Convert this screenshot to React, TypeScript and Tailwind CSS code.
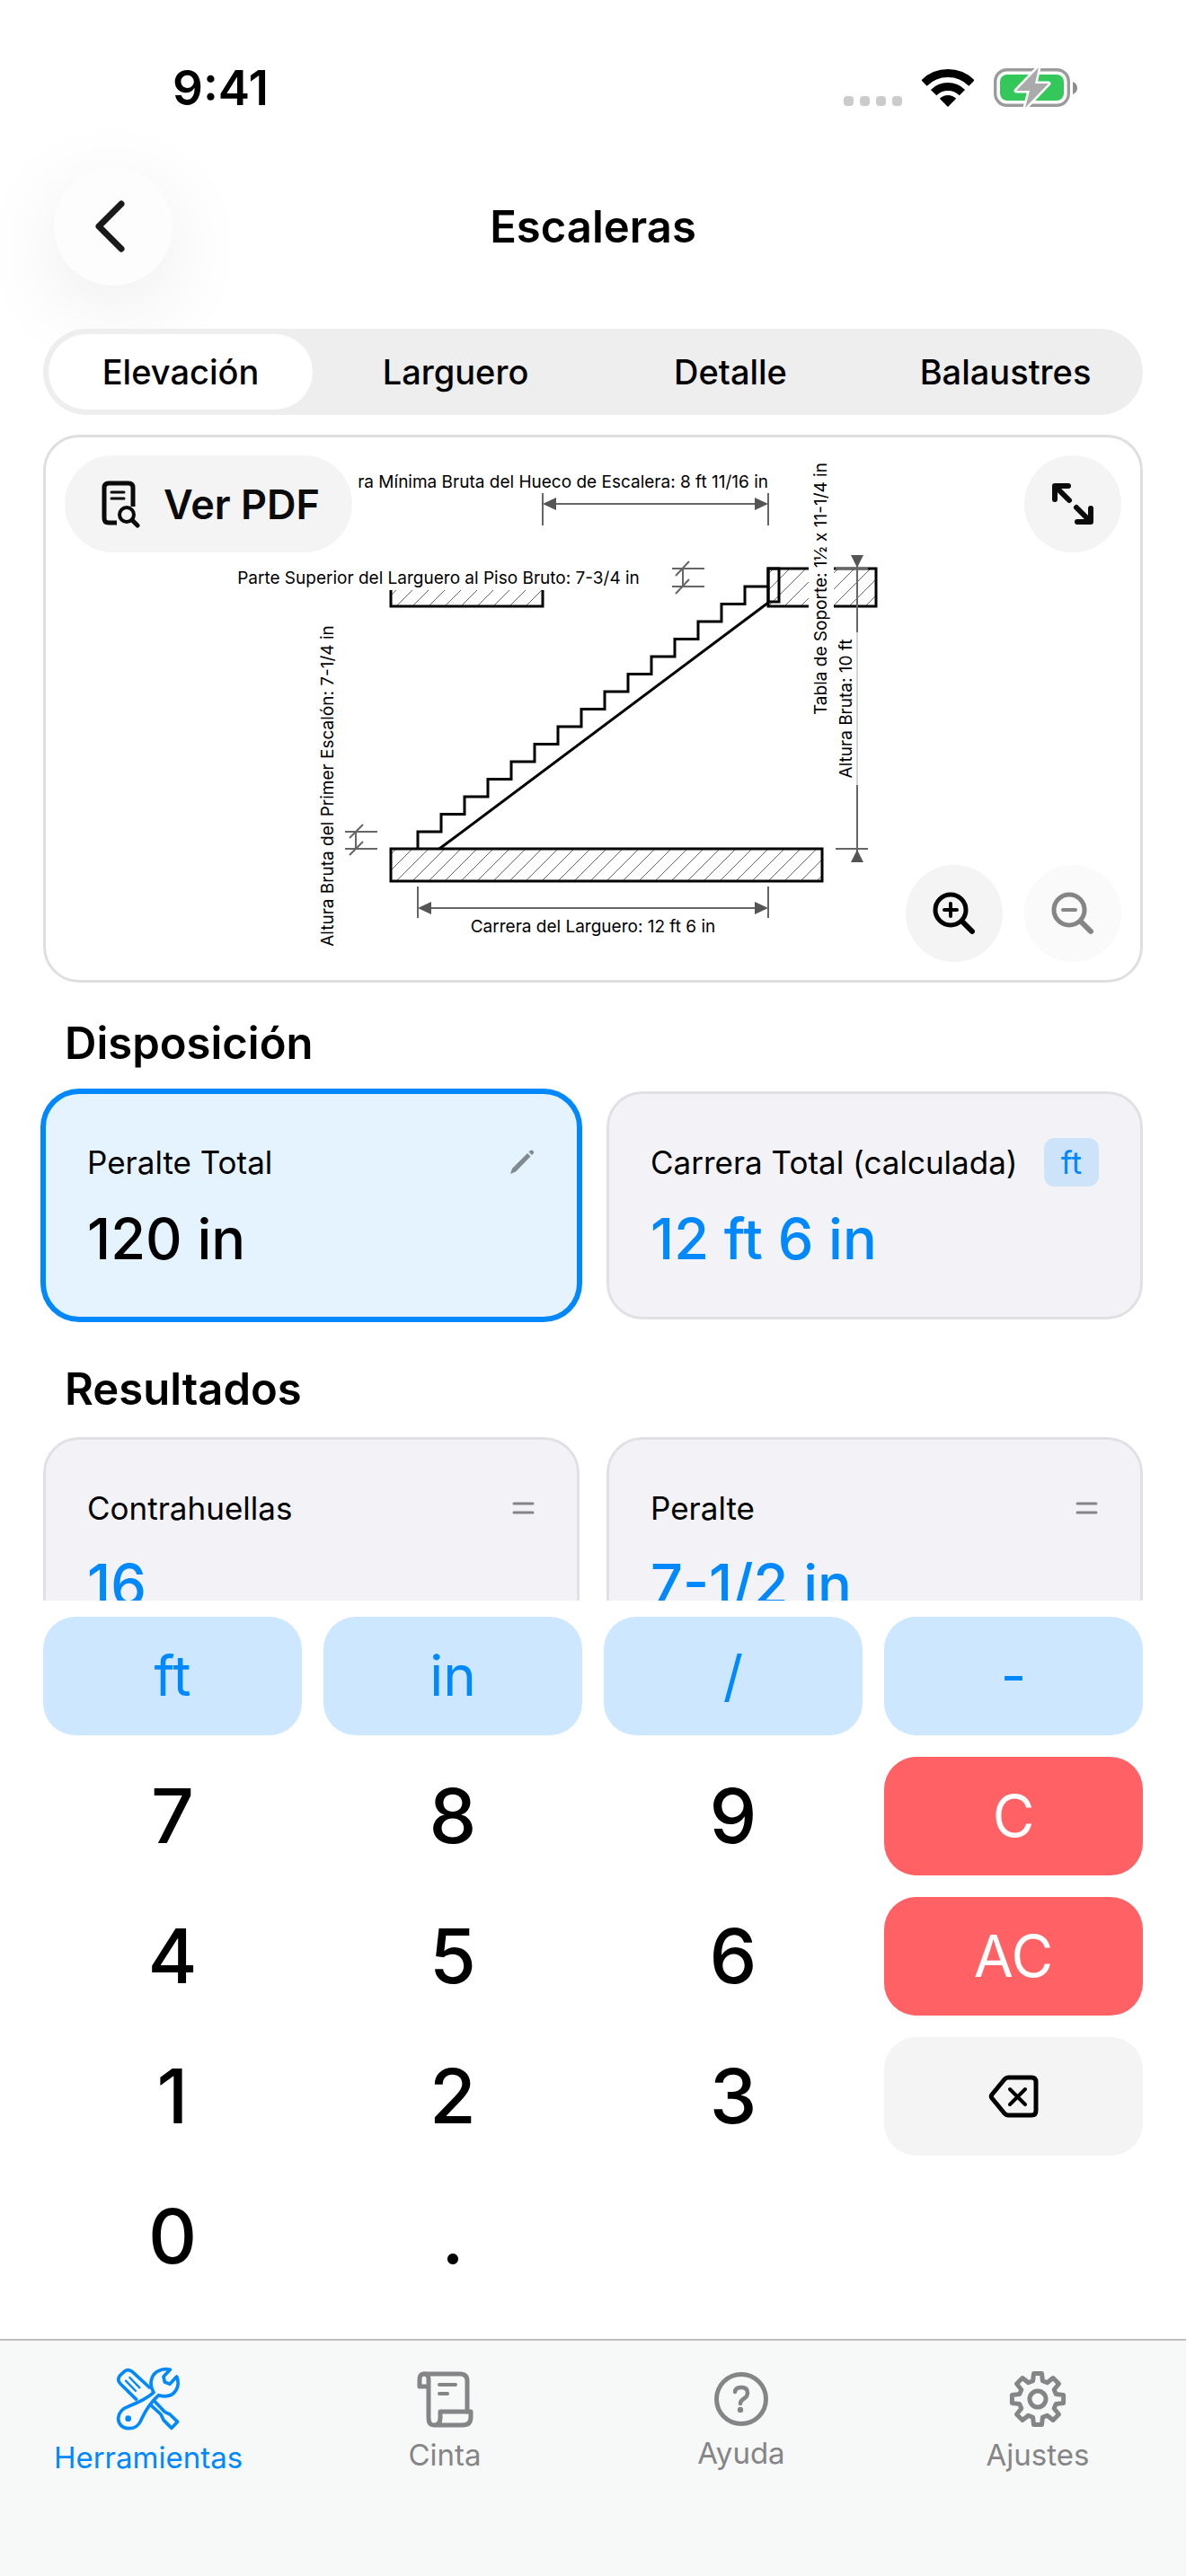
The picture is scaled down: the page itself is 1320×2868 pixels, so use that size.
import React, { useState } from 'react';

const tabs = ['Elevación', 'Larguero', 'Detalle', 'Balaustres'];

const STEP_RUN = 26;
const STEP_RISE = 19.5;

// Stair outline, from the lower floor up to the header board
const stairPath = (() => {
  let d = 'M465 945 V926';
  for (let i = 1; i <= 14; i++) {
    d += ` H${465 + i * STEP_RUN} V${926 - i * STEP_RISE}`;
  }
  return d + ' H855';
})();

const gearPath = (() => {
  const pts: string[] = [];
  for (let i = 0; i < 8; i++) {
    const corners = [[21, -15], [29, -9], [29, 9], [21, 15]];
    corners.forEach(([r, off]) => {
      const a = ((i * 45 + off) * Math.PI) / 180;
      pts.push(`${(32 + r * Math.sin(a)).toFixed(1)} ${(32 - r * Math.cos(a)).toFixed(1)}`);
    });
  }
  return `M${pts.join(' L')} Z`;
})();

function StatusBar() {
  return (
    <div className="h-[186px] shrink-0 pt-[10px] pl-48 pr-30 flex items-center justify-between">
      <span className="text-[53px] leading-none font-semibold">9:41</span>
      <div className="flex items-center gap-[22px]">
        <div className="flex gap-[7px] pt-7">
          {[0, 1, 2, 3].map((dot) => (
            <span key={dot} className="size-[11px] rounded-sm bg-[#cbcbcb]"></span>
          ))}
        </div>
        <svg width="58" height="42" viewBox="0 0 58 42" fill="none" stroke="black" strokeWidth="9">
          <path d="M2.5 15.5 A37.5 37.5 0 0 1 55.5 15.5" />
          <path d="M13.1 26.1 A22.5 22.5 0 0 1 44.9 26.1" />
          <path d="M29 42 L19.8 32.8 A13 13 0 0 1 38.2 32.8 Z" fill="black" stroke="none" />
        </svg>
        <svg width="94" height="46" viewBox="0 0 94 46" fill="none">
          <rect x="1.7" y="2.7" width="81.6" height="39.6" rx="13" stroke="#9b9b9b" strokeWidth="3.4" />
          <rect x="7" y="8" width="71" height="29" rx="8" fill="#34c759" />
          <path d="M88 16 Q93 18 93 23 Q93 28 88 30 Z" fill="#8e8e8e" />
          <path d="M50 0 L25 26 H40 L35 45 L61 18 H46 Z" fill="#aaaaaa" stroke="white" strokeWidth="5" strokeLinejoin="round" paintOrder="stroke" />
        </svg>
      </div>
    </div>
  );
}

function Diagram() {
  return (
    <svg className="block w-full h-auto" viewBox="51 487 1218 604" fill="none" fontFamily="Inter, sans-serif" fontSize="19">
      <defs>
        <pattern id="hatch" width="18" height="18" patternUnits="userSpaceOnUse">
          <path d="M-1 19 L19 -1 M-10 10 L10 -10 M8 28 L28 8" stroke="#666" strokeWidth="1" />
        </pattern>
      </defs>

      {/* Floors */}
      <g fill="url(#hatch)" stroke="black" strokeWidth="3">
        <rect x="435" y="633" width="169" height="42" />
        <rect x="855" y="633" width="120" height="42" />
        <rect x="435" y="945" width="480" height="36" />
      </g>

      {/* Stringer and header board */}
      <g stroke="black" strokeWidth="3">
        <path d={stairPath} />
        <path d="M489 945 L855 671" />
        <path d="M855 633 H867 V670 H855 Z" />
      </g>

      {/* Label backgrounds */}
      <g fill="white">
        <rect x="250" y="624" width="475" height="33" />
        <rect x="900" y="505" width="28" height="300" />
      </g>

      {/* Dimension lines */}
      <g stroke="#666" strokeWidth="2">
        <path d="M604 549 V585 M855 549 V585 M612 561 H846" />
        <path d="M465 987 V1022 M855 987 V1022 M473 1011 H846" />
        <path d="M748 633 H784 M748 653 H784 M760 633 V653" />
        <path d="M752 641 L767 625 M752 661 L767 645" />
        <path d="M384 926 H420 M384 945 H420 M396 926 V945" />
        <path d="M389 933 L404 918 M389 952 L404 937" />
        <path d="M954 625 V704 M954 874 V950 M930 945 H966 M930 633 H966" />
        <path d="M954 704 V874" stroke="#aaa" strokeWidth="1" />
      </g>
      <g fill="#555">
        <path d="M604 561 L619 554 V568 Z" />
        <path d="M855 561 L840 554 V568 Z" />
        <path d="M465 1011 L480 1004 V1018 Z" />
        <path d="M855 1011 L840 1004 V1018 Z" />
        <path d="M954 632 L947 618 H961 Z" />
        <path d="M954 946 L947 960 H961 Z" />
      </g>

      <g fill="black">
        <text x="855" y="543" textAnchor="end">ra Mínima Bruta del Hueco de Escalera: 8 ft 11/16 in</text>
        <text x="488" y="650" textAnchor="middle">Parte Superior del Larguero al Piso Bruto: 7-3/4 in</text>
        <text x="660" y="1038" textAnchor="middle">Carrera del Larguero: 12 ft 6 in</text>
        <text transform="translate(371 875) rotate(-90)" textAnchor="middle">Altura Bruta del Primer Escalón: 7-1/4 in</text>
        <text transform="translate(920 796) rotate(-90)">Tabla de Soporte: 1½ x 11-1/4 in</text>
        <text transform="translate(948 789) rotate(-90)" textAnchor="middle">Altura Bruta: 10 ft</text>
      </g>
    </svg>
  );
}

function ZoomIcon({ plus = false }: { plus?: boolean }) {
  return (
    <svg width="48" height="48" viewBox="0 0 48 48" fill="none" stroke="currentColor" strokeWidth="5" strokeLinecap="round">
      <circle cx="20" cy="20" r="17" />
      <path d="M33 33 L44 44" strokeWidth="6" />
      <path d={plus ? 'M13 20 H27 M20 13 V27' : 'M13 20 H27'} strokeWidth="4" />
    </svg>
  );
}

interface CardProps {
  label: string;
  value: string;
  icon: React.ReactNode;
  selected?: boolean;
}

function ValueCard({ label, value, icon, selected }: CardProps) {
  return (
    <button
      className={
        selected
          ? 'text-left rounded-[40px] border-[3px] border-[#0088ff] ring-3 ring-[#0088ff] bg-[#e5f3ff] px-[46px] pt-[49px] pb-[55px]'
          : 'text-left rounded-[40px] border-[3px] border-[#e1e1e5] bg-[#f2f2f7] px-[46px] pt-[49px] pb-[55px]'
      }
    >
      <span className="flex items-center justify-between h-[54px] text-[35px] whitespace-nowrap">
        {label}
        {icon}
      </span>
      <span className={selected ? 'block mt-[26px] text-[63px] leading-[64px] font-medium' : 'block mt-[26px] text-[63px] leading-[64px] font-medium text-[#0088ff]'}>
        {value}
      </span>
    </button>
  );
}

const PencilIcon = (
  <svg width="30" height="30" viewBox="0 0 30 30" fill="#808890">
    <path d="M2 28 L4 22 L21 5 L24.500 8.500 L8 25.500 Z" />
    <path d="M22.500 3.500 L24 2 Q25.500 .8 27 2 L27.500 2.500 Q29 4 27.500 5.500 L26 7 Z" />
  </svg>
);

const EqualIcon = (
  <svg width="26" height="16" viewBox="0 0 26 16" stroke="#858589" strokeWidth="3" strokeLinecap="round">
    <path d="M2 3 H23 M2 13 H23" />
  </svg>
);

const UnitChip = <span className="rounded-xl bg-[#cce3fa] px-[19px] leading-[54px] text-[#0088ff]">ft</span>;

const blueKey = 'h-[132px] rounded-[36px] bg-[#cce7ff] text-[#0088ff] text-[62px] leading-none';
const redKey = 'h-[132px] rounded-[36px] bg-[#ff6165] text-white text-[64px] leading-none';
const digitKey = 'h-[132px] rounded-[36px] text-[84px] leading-none font-medium';

function Keypad() {
  return (
    <div className="shrink-0 grid grid-cols-4 gap-6 px-12 pt-[18px] pb-12">
      {['ft', 'in', '/', '-'].map((key) => (
        <button key={key} className={blueKey}>{key}</button>
      ))}
      {['7', '8', '9'].map((key) => (
        <button key={key} className={digitKey}>{key}</button>
      ))}
      <button className={redKey}>C</button>
      {['4', '5', '6'].map((key) => (
        <button key={key} className={digitKey}>{key}</button>
      ))}
      <button className={redKey}>AC</button>
      {['1', '2', '3'].map((key) => (
        <button key={key} className={digitKey}>{key}</button>
      ))}
      <button className="h-[132px] rounded-[36px] bg-[#f4f4f4] flex items-center justify-center" aria-label="Borrar">
        <svg width="56" height="48" viewBox="0 0 56 48" fill="none" stroke="black" strokeWidth="5" strokeLinecap="round" strokeLinejoin="round">
          <path d="M22 3 H48 Q53 3 53 8 V40 Q53 45 48 45 H22 Q20 45 18 43 L4 26 Q2.500 24 4 22 L18 5 Q20 3 22 3 Z" />
          <path d="M24 16 L41 33 M41 16 L24 33" strokeWidth="4" />
        </svg>
      </button>
      {['0', '.'].map((key) => (
        <button key={key} className={digitKey}>{key}</button>
      ))}
    </div>
  );
}

function TabBar() {
  const item = 'flex flex-col items-center gap-[10px] text-[33px] leading-[40px] text-[#858587]';
  return (
    <nav className="shrink-0 h-[264px] grid grid-cols-4 border-t-2 border-[#c0bfc1] bg-[#f7f8f8] pt-7">
      <a href="#herramientas" className="flex flex-col items-center gap-[10px] text-[33px] leading-[40px] text-[#0088ff]">
        <svg width="72" height="72" viewBox="27 30 216 216" fill="none" stroke="currentColor" strokeWidth="11" strokeLinejoin="round">
          <path d="M98 145 L42 90 Q29 76 41 62 L55 49 Q68 38 82 50 L142 105" />
          <path d="M60 80 L93 114 M73 69 L106 103" strokeWidth="7" strokeLinecap="round" />
          <path d="M140 158 L177 192 L186 211 L213 238 L233 217 L207 192 L190 184 L155 147" />
          <path d="M153 119 C136 92 144 55 174 45 Q190 38 208 43 L186 66 L190 84 L207 91 L230 66 C240 90 232 114 214 126 Q194 136 170 128 C152 144 130 170 113 207 C104 232 84 240 68 239 C46 238 34 222 35 204 C37 182 50 172 72 164 C104 152 130 140 153 119 Z" />
          <circle cx="68" cy="206" r="10" fill="currentColor" stroke="none" />
        </svg>
        Herramientas
      </a>
      <a href="#cinta" className={item}>
        <svg width="63" height="69" viewBox="0 -6 63 69" fill="none" stroke="currentColor" strokeWidth="5" strokeLinejoin="round" strokeLinecap="round">
          <path d="M13 17 H3 V9 Q3 3 8 3 Q13 3 13 9 V52 Q13 60 19 60 Q26 60 26 52 V45 H60 V51 Q60 60 51 60 H19" />
          <path d="M8 3 H48 Q56 3 56 11 V45" />
          <path d="M25 15 H43 M25 25 H34" strokeWidth="4" />
        </svg>
        Cinta
      </a>
      <a href="#ayuda" className={item}>
        <svg width="60" height="67" viewBox="0 -7 60 67" fill="none" stroke="currentColor" strokeWidth="5" strokeLinecap="round" strokeLinejoin="round">
          <circle cx="30" cy="30" r="27.500" />
          <path d="M23 22 Q23.500 17 30 17 Q37 17 37 23 Q37 27 33 29.500 Q29 32 29 35" strokeWidth="4.500" />
          <circle cx="29" cy="42" r="3.200" fill="currentColor" stroke="none" />
        </svg>
        Ayuda
      </a>
      <a href="#ajustes" className={item}>
        <svg width="64" height="69" viewBox="0 -5 64 69" fill="none" stroke="currentColor" strokeWidth="5" strokeLinejoin="round">
          <path d={gearPath} />
          <circle cx="32" cy="32" r="9" />
        </svg>
        Ajustes
      </a>
    </nav>
  );
}

export default function App() {
  const [activeTab, setActiveTab] = useState('Elevación');
  const round = 'size-[108px] rounded-full bg-[#f4f4f4] flex items-center justify-center';

  return (
    <div className="h-screen flex flex-col bg-white text-black font-['Inter',sans-serif] overflow-hidden">
      <StatusBar />

      {/* Header */}
      <header className="shrink-0 grid grid-cols-[1fr_auto_1fr] items-center px-15">
        <button className="size-[132px] rounded-full bg-[#fdfdfd] shadow-[0_24px_96px_rgba(0,0,0,0.08)] flex items-center justify-center" aria-label="Volver">
          <svg width="40" height="60" viewBox="0 0 40 60" fill="none" stroke="#1a1a1a" strokeWidth="7" strokeLinecap="round" strokeLinejoin="round">
            <path d="M29 5 L4 30 L29 55" />
          </svg>
        </button>
        <h1 className="text-[49px] leading-none font-semibold">Escaleras</h1>
      </header>

      <div className="relative shrink-0 mx-12 mt-12 h-24 rounded-full bg-[#eeeeee] grid grid-cols-4" role="tablist">
        {tabs.map((tab) => (
          <button
            key={tab}
            role="tab"
            aria-selected={tab === activeTab}
            onClick={() => setActiveTab(tab)}
            className={
              tab === activeTab
                ? 'm-[6px] rounded-full bg-white text-[38px] leading-none font-medium'
                : 'm-[6px] rounded-full text-[38px] leading-none font-medium'
            }
          >
            {tab}
          </button>
        ))}
      </div>

      {/* Drawing */}
      <div className="relative shrink-0 mx-12 mt-[22px] border-[3px] border-[#dfdfdf] rounded-[40px] overflow-hidden">
        <Diagram />
        <button className="absolute top-5 left-[21px] h-[108px] rounded-full bg-[#f4f4f4] text-[#0b0b0b] pl-10 pr-9 flex items-center gap-6 text-[45px] leading-none font-semibold">
          <svg width="46" height="54" viewBox="0 0 46 54" fill="none" stroke="currentColor" strokeLinecap="round">
            <path d="M36 30 V9 Q36 4 31 4 H9 Q4 4 4 9 V43 Q4 48 9 48 H18" strokeWidth="5" strokeLinecap="butt" />
            <path d="M12 14 H26 M12 21 H26" strokeWidth="3" />
            <circle cx="29" cy="39" r="8" strokeWidth="4" />
            <path d="M35 45 L41 51" strokeWidth="5" />
          </svg>
          Ver PDF
        </button>
        <button className="absolute top-5 right-[21px] size-[108px] rounded-full bg-[#f4f4f4] flex items-center justify-center" aria-label="Ampliar">
          <svg width="48" height="48" viewBox="0 0 48 48" fill="none" stroke="#0b0b0b" strokeWidth="6" strokeLinecap="round" strokeLinejoin="round">
            <path d="M20 20 L5 5 M19 4 H4 V19" />
            <path d="M28 28 L43 43 M29 44 H44 V29" />
          </svg>
        </button>
        <div className="absolute bottom-5 right-[21px] flex gap-6">
          <button className={round} aria-label="Acercar"><ZoomIcon plus /></button>
          <button className="size-[108px] rounded-full bg-[#fafafa] text-[#858585] flex items-center justify-center" aria-label="Alejar">
            <ZoomIcon />
          </button>
        </div>
      </div>

      {/* Values, cut off by the keypad */}
      <main className="flex-1 min-h-0 overflow-hidden px-12 pt-[38px]">
        <h2 className="px-6 text-[49px] leading-[60px] font-semibold">Disposición</h2>
        <div className="mt-[23px] grid grid-cols-2 gap-[30px]">
          <ValueCard label="Peralte Total" value="120 in" icon={PencilIcon} selected />
          <ValueCard label="Carrera Total (calculada)" value="12 ft 6 in" icon={UnitChip} />
        </div>
        <h2 className="mt-12 px-6 text-[49px] leading-[60px] font-semibold">Resultados</h2>
        <div className="mt-[23px] grid grid-cols-2 gap-[30px]">
          <ValueCard label="Contrahuellas" value="16" icon={EqualIcon} />
          <ValueCard label="Peralte" value="7-1/2 in" icon={EqualIcon} />
        </div>
      </main>

      <Keypad />
      <TabBar />
    </div>
  );
}
